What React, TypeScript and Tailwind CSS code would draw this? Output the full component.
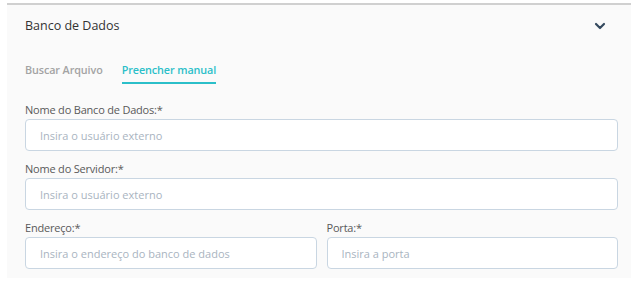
import { useState } from 'react';

function Field({ label, placeholder }: { label: string; placeholder: string }) {
  return (
    <div className="flex flex-col">
      <label className="text-[11px] leading-[16px] tracking-[-0.2px] text-[#595959]">{label}</label>
      <input
        type="text"
        placeholder={placeholder}
        className="mt-[1px] h-[32px] w-full rounded-[4px] border border-[#c9d6e2] bg-white px-[14px] text-[11px] text-[#444] outline-none placeholder:text-[#a9b4bf]"
      />
    </div>
  );
}

export default function App() {
  const [tab, setTab] = useState<'file' | 'manual'>('manual');

  return (
    <div className="h-[286px] w-[631px] overflow-hidden bg-white pl-[7px] pt-[3px] font-['Open_Sans',sans-serif]">
      <div className="h-[275px] border-t-2 border-[#d0d0d0] bg-[#fafafa] pl-[18px] pr-[13px]">
        <div className="flex h-[42px] items-center justify-between">
          <span className="text-[12.5px] text-[#333]">Banco de Dados</span>
          <svg className="mr-[12px] h-[12px] w-[12px]" viewBox="0 0 12 12" fill="none">
            <path d="M2 4l4 4 4-4" stroke="#34495e" strokeWidth="2.2" strokeLinecap="round" strokeLinejoin="round" />
          </svg>
        </div>

        <div className="mt-[15px] flex gap-[19px] text-[10.8px] font-semibold tracking-[-0.1px]">
          <button
            onClick={() => setTab('file')}
            className={`pb-[4px] ${tab === 'file' ? 'border-b-2 border-[#2bbfc9] text-[#2bbfc9]' : 'border-b-2 border-transparent text-[#a3a3a3]'}`}
          >
            Buscar Arquivo
          </button>
          <button
            onClick={() => setTab('manual')}
            className={`pb-[4px] ${tab === 'manual' ? 'border-b-2 border-[#2bbfc9] text-[#2bbfc9]' : 'border-b-2 border-transparent text-[#a3a3a3]'}`}
          >
            Preencher manual
          </button>
        </div>

        <div className="mt-[18px] flex flex-col gap-[10px]">
          <Field label="Nome do Banco de Dados:*" placeholder="Insira o usuário externo" />
          <Field label="Nome do Servidor:*" placeholder="Insira o usuário externo" />
          <div className="grid grid-cols-2 gap-[10px]">
            <Field label="Endereço:*" placeholder="Insira o endereço do banco de dados" />
            <Field label="Porta:*" placeholder="Insira a porta" />
          </div>
        </div>
      </div>
    </div>
  );
}
